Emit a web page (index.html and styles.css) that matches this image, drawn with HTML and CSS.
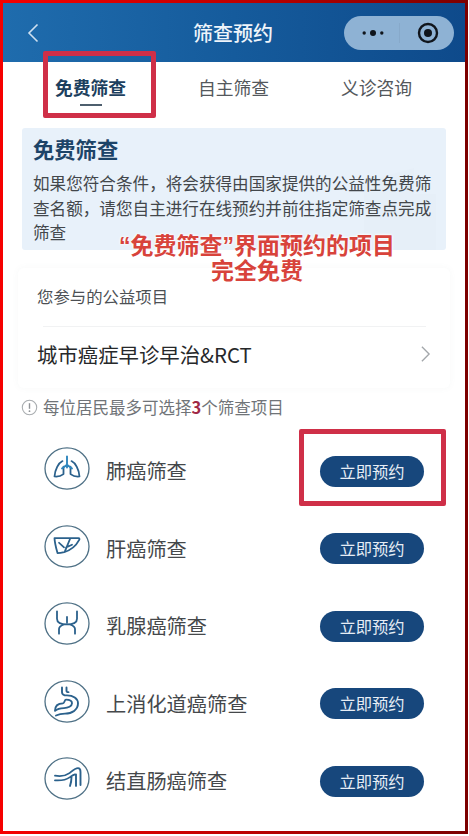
FILE: index.html
```html
<!DOCTYPE html>
<html lang="zh-CN">
<head>
<meta charset="utf-8">
<title>筛查预约</title>
<link rel="stylesheet" href="styles.css">
</head>
<body>
<div class="frame">
  <div class="page">
    <header class="navbar">
      <svg class="back" viewBox="0 0 12 20" width="12" height="20"><path d="M10.500 1.500 2 10l8.500 8.500" fill="none" stroke="#cfe0f0" stroke-width="1.600"/></svg>
      <h1 class="nav-title">筛查预约</h1>
      <div class="capsule">
        <svg class="dots" viewBox="0 0 22 8" width="22" height="8"><circle cx="2.200" cy="4" r="1.700"/><circle cx="11" cy="4" r="3"/><circle cx="19.800" cy="4" r="1.700"/></svg>
        <span class="capsule-sep"></span>
        <svg class="target" viewBox="0 0 22 22" width="22" height="22"><circle cx="11" cy="11" r="9" fill="none" stroke="#10151c" stroke-width="2.400"/><circle cx="11" cy="11" r="4" fill="#10151c"/></svg>
      </div>
    </header>

    <nav class="tabs">
      <div class="tab tab-active">免费筛查</div>
      <div class="tab">自主筛查</div>
      <div class="tab">义诊咨询</div>
    </nav>

    <section class="intro">
      <svg class="intro-bg" viewBox="0 0 90 90" width="90" height="90"><path d="M14 90V22l50-14v82zM64 34h22v56H64z" fill="#e0eaf4"/></svg>
      <h2 class="intro-title">免费筛查</h2>
      <p class="intro-text">如果您符合条件，将会获得由国家提供的公益性免费筛查名额，请您自主进行在线预约并前往指定筛查点完成筛查</p>
    </section>

    <section class="project">
      <div class="project-label">您参与的公益项目</div>
      <div class="project-divider"></div>
      <div class="project-row">
        <span class="project-name">城市癌症早诊早治&amp;RCT</span>
        <svg viewBox="0 0 12 20" width="11" height="18"><path d="M2 2l8 8-8 8" fill="none" stroke="#a3a7ab" stroke-width="1.500"/></svg>
      </div>
    </section>

    <div class="notice">
      <svg viewBox="0 0 17 17" width="17" height="17"><circle cx="8.500" cy="8.500" r="7.200" fill="none" stroke="#a9adb0" stroke-width="1.100"/><path d="M8.500 4.200v5.600" stroke="#8f9397" stroke-width="1.400"/><circle cx="8.500" cy="12.200" r=".9" fill="#8f9397"/></svg>
      <span>每位居民最多可选择<b class="notice-num">3</b>个筛查项目</span>
    </div>

    <ul class="list">
      <li class="item">
        <svg class="item-icon" viewBox="0 0 46 46" width="46" height="43" preserveAspectRatio="none"><circle class="ring" cx="23" cy="23" r="22"/><path class="glyph" d="M18.500 15c-4 2-7.500 9-8 16.500 3.500.5 6.500-.5 9-2.500v-8M27.500 15c4 2 7.500 9 8 16.500-3.500.5-6.500-.5-9-2.500v-8"/><path class="bronchi" d="M23 10v12M23 19l-5 4M23 19l5 4"/></svg>
        <span class="item-name">肺癌筛查</span>
        <button class="book">立即预约</button>
      </li>
      <li class="item">
        <svg class="item-icon" viewBox="0 0 46 46" width="46" height="43" preserveAspectRatio="none"><circle class="ring" cx="23" cy="23" r="22"/><path class="glyph" d="M10.500 14h24c1 0 1.200 1 .7 2-3 6-8 11-15 13-2 .5-4 1-6.700 1-1.300-5-2.700-10-3-16z"/><path class="glyph" d="M26 15l-5 13M15 19l5 5M28 21l-6 3"/></svg>
        <span class="item-name">肝癌筛查</span>
        <button class="book">立即预约</button>
      </li>
      <li class="item">
        <svg class="item-icon" viewBox="0 0 46 46" width="46" height="43" preserveAspectRatio="none"><circle class="ring" cx="23" cy="23" r="22"/><path class="glyph" d="M13 10v8c0 4 4 6 10 6 6 0 10-2 10-6v-8M15 34v-5c0-3 2-4 5-5M31 34v-5c0-3-2-4-5-5M23 16v6"/></svg>
        <span class="item-name">乳腺癌筛查</span>
        <button class="book">立即预约</button>
      </li>
      <li class="item">
        <svg class="item-icon" viewBox="0 0 46 46" width="46" height="43" preserveAspectRatio="none"><circle class="ring" cx="23" cy="23" r="22"/><path class="glyph thick" d="M18 8v5c0 2.500 2 3.500 5 3.500 6 0 11 3 11 8.500 0 7-6 11-13 11-3.500 0-6 .5-9 2M22.500 8v3.500c0 1 1 1.500 2 1.500M22 21c3 0 6 1 6 4 0 3-4 5-8 5-4 0-7 1-9 3 0-5 3-8 8-8 1.500 0 1.500-4 3-4z"/></svg>
        <span class="item-name">上消化道癌筛查</span>
        <button class="book">立即预约</button>
      </li>
      <li class="item">
        <svg class="item-icon" viewBox="0 0 46 46" width="46" height="43" preserveAspectRatio="none"><circle class="ring" cx="23" cy="23" r="22"/><path class="glyph thick" d="M11 20c5 1 10 .5 14-2.500 3-2.300 6-5.500 9-5.500 2 0 2.500 2 2.500 4v14M11 25c6 .5 11-.5 15-3.500 2-1.500 3-2.500 5-3M26 31c1-3 1.500-6 1.500-9.500M32 18.500V31"/></svg>
        <span class="item-name">结直肠癌筛查</span>
        <button class="book">立即预约</button>
      </li>
    </ul>

    <div class="mark mark-tab"></div>
    <div class="mark mark-book"></div>
    <div class="annotation">“免费筛查”界面预约的项目<br>完全免费</div>
  </div>
</div>
</body>
</html>
```
FILE: styles.css
```css
* { box-sizing: border-box; }
html, body { margin: 0; padding: 0; background: #fff; }
body { font-family: "Noto Sans CJK SC", "Noto Sans", sans-serif; width: 469px; height: 836px; overflow: hidden; }

.frame {
  width: 468px;
  height: 834px;
  padding: 3px;
  background: linear-gradient(90deg, #f60000 0%, #c00000 50%, #7c0000 100%);
}
.page { position: relative; height: 100%; background: #fff; overflow: hidden; }

.navbar {
  height: 59px;
  display: flex;
  align-items: center;
  position: relative;
  padding: 0 11px 0 24px;
  background: linear-gradient(90deg, #1f6cad 0%, #155b9c 50%, #0e4a8b 100%);
}
.back { display: block; }
.nav-title {
  position: absolute;
  left: 0; right: 0;
  top: 16px;
  margin: 0;
  text-align: center;
  font-size: 20px;
  line-height: 28px;
  font-weight: 500;
  color: #eef4fa;
  padding-right: 2px;
}
.capsule {
  margin-left: auto;
  width: 110px;
  height: 34px;
  border-radius: 17px;
  background: #8eb2d4;
  display: flex;
  align-items: center;
  padding: 0 15px 0 18px;
}
.dots { fill: #10151c; display: block; }
.capsule-sep { width: 1px; height: 20px; background: #87a9ca; margin-left: 15px; }
.target { display: block; margin-left: auto; }

.tabs { display: flex; justify-content: space-between; height: 58px; padding: 10px 53px 0 52px; }
.tab { position: relative; font-size: 17.800px; line-height: 30px; height: 30px; color: #54585c; width: 71px; white-space: nowrap; }
.tab-active { color: #1d3f5e; font-weight: 700; }
.tab-active::after {
  content: "";
  position: absolute;
  left: 25px;
  top: 32px;
  width: 22px;
  height: 2px;
  background: #4e5f6e;
}

.intro {
  position: relative;
  margin: 8px 19px 0 19px;
  height: 122px;
  padding: 6px 10px 0 11px;
  background: #e8f1fa;
  border-radius: 3px;
  overflow: hidden;
}
.intro-bg { position: absolute; right: 6px; bottom: 0; opacity: .3; }
.intro-title { position: relative; margin: 0; font-size: 21.300px; line-height: 30px; font-weight: 700; color: #1d4468; }
.intro-text { position: relative; margin: 7px 0 0 0; font-size: 16.600px; line-height: 24.500px; color: #43474b; width: 401px; }

.project {
  margin: 18px 15px 0 15px;
  padding: 0 19px;
  height: 120px;
  border-radius: 6px;
  box-shadow: 0 0 6px rgba(120, 130, 140, .06);
}
.project-label {
  height: 58px;
  padding-top: 16px;
  font-size: 16.400px;
  line-height: 24px;
  color: #4c5054;
  white-space: nowrap;
}
.project-divider { height: 1px; margin: 0 5px 0 6px; background: #f1f2f3; }
.project-row { display: flex; align-items: center; justify-content: space-between; height: 54px; }
.project-name { font-size: 20.400px; line-height: 28px; color: #26282a; white-space: nowrap; }

.notice { display: flex; align-items: center; gap: 5px; margin: 6px 0 0 18px; height: 26px; font-size: 16.500px; color: #707478; white-space: nowrap; }
.notice-num { color: #a02846; font-weight: 700; }

.list { list-style: none; margin: 12.500px 0 0 0; padding: 0 41px 0 41px; }
.item { display: flex; align-items: center; height: 77.500px; }
.item-icon { flex: none; display: block; margin-top: -5px; }
.ring { fill: none; stroke: #4f7186; stroke-width: 1.300; }
.glyph { fill: none; stroke: #2b618c; stroke-width: 1.800; stroke-linecap: round; stroke-linejoin: round; }
.bronchi { fill: none; stroke: #2f86bd; stroke-width: 1.900; stroke-linecap: round; }
.thick { stroke-width: 1.900; }
.item-name { margin-left: 16px; font-size: 20.200px; line-height: 28px; color: #45484b; white-space: nowrap; }
.book {
  margin-left: auto;
  width: 104px;
  height: 31px;
  border: 0;
  padding: 0;
  border-radius: 16px;
  background: #17477c;
  color: #e6edf5;
  font-family: inherit;
  font-size: 16.300px;
  line-height: 31px;
}

.mark { position: absolute; border: 5px solid #cf2f48; border-radius: 2px; }
.mark-tab { left: 40px; top: 48px; width: 113px; height: 67px; }
.mark-book { left: 296px; top: 426px; width: 147px; height: 77px; }
.annotation {
  position: absolute;
  left: 104px;
  top: 231px;
  width: 300px;
  text-align: center;
  font-family: "Liberation Sans", "Noto Sans CJK SC", sans-serif;
  font-size: 23px;
  line-height: 25px;
  font-weight: 700;
  color: #d8433b;
  text-shadow: 0 0 3px #fff, 0 0 3px #fff;
  white-space: nowrap;
}
```
